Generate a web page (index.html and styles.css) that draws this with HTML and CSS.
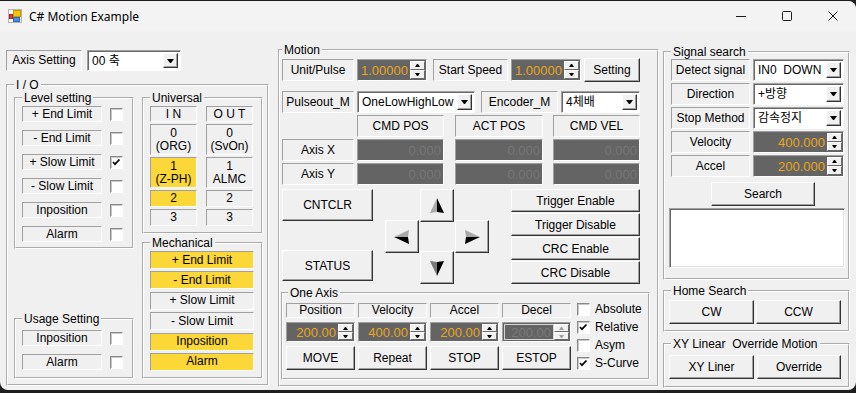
FILE: index.html
```html
<!DOCTYPE html>
<html>
<head>
    <meta charset="utf-8">
    <link rel="stylesheet" href="styles.css">
</head>
<body>
<div class="window">
    <div class="titlebar">
        <svg class="app-icon" width="14" height="14" viewBox="0 0 14 14">
            <rect x="0.5" y="0.5" width="13" height="13" fill="#f6f6f6" stroke="#b4b4b4"/>
            <rect x="5.5" y="1.5" width="7" height="6" fill="#f7c600" stroke="#c99a00"/>
            <rect x="5.5" y="8.5" width="6" height="4" fill="#4a90e2" stroke="#2d6cb5"/>
            <rect x="1.5" y="5.5" width="3" height="4" fill="#e03c31" stroke="#a52a22"/>
        </svg>
        <span class="title">C# Motion Example</span>
        <div class="caption-buttons">
            <span><svg width="10" height="10"><path d="M0 5.5h10" stroke="#1b1b1b"/></svg></span>
            <span><svg width="10" height="10"><rect x="0.5" y="0.5" width="9" height="9" rx="1" fill="none" stroke="#1b1b1b"/></svg></span>
            <span><svg width="10" height="10"><path d="M0.5 0.5l9 9M9.5 0.5l-9 9" stroke="#1b1b1b"/></svg></span>
        </div>
    </div>

    <div class="client">
        <div class="col-left">
            <div class="axis-row">
                <div class="lbl axis-lbl">Axis Setting</div>
                <div class="combo axis-combo"><span class="combo-text">00 축</span><span class="drop"></span></div>
            </div>

            <fieldset class="group io">
                <legend>I / O</legend>
                <div class="io-body">
                    <div class="io-left">
                        <fieldset class="group level">
                            <legend>Level setting</legend>
                            <div class="checks">
                                <div class="chk-row"><div class="lbl">+ End Limit</div><span class="chk"></span></div>
                                <div class="chk-row"><div class="lbl">- End Limit</div><span class="chk"></span></div>
                                <div class="chk-row"><div class="lbl">+ Slow Limit</div><span class="chk"><svg width="11" height="11" viewBox="0 0 11 11"><path d="M2 5l2 2.2L8.5 2.5" stroke="#000" stroke-width="1.7" fill="none"/></svg></span></div>
                                <div class="chk-row"><div class="lbl">- Slow Limit</div><span class="chk"></span></div>
                                <div class="chk-row"><div class="lbl">Inposition</div><span class="chk"></span></div>
                                <div class="chk-row"><div class="lbl">Alarm</div><span class="chk"></span></div>
                            </div>
                        </fieldset>

                        <fieldset class="group usage">
                            <legend>Usage Setting</legend>
                            <div class="checks">
                                <div class="chk-row"><div class="lbl">Inposition</div><span class="chk"></span></div>
                                <div class="chk-row"><div class="lbl">Alarm</div><span class="chk"></span></div>
                            </div>
                        </fieldset>
                    </div>

                    <div class="io-right">
                        <fieldset class="group universal">
                            <legend>Universal</legend>
                            <div class="uni-grid">
                                <div class="lbl">I N</div>
                                <div class="lbl">O U T</div>
                                <div class="lbl">0<br>(ORG)</div>
                                <div class="lbl">0<br>(SvOn)</div>
                                <div class="lbl on">1<br>(Z-PH)</div>
                                <div class="lbl">1<br>ALMC</div>
                                <div class="lbl on">2</div>
                                <div class="lbl">2</div>
                                <div class="lbl">3</div>
                                <div class="lbl">3</div>
                            </div>
                        </fieldset>

                        <fieldset class="group mech">
                            <legend>Mechanical</legend>
                            <div class="mech-list">
                                <div class="lbl on">+ End Limit</div>
                                <div class="lbl on">- End Limit</div>
                                <div class="lbl">+ Slow Limit</div>
                                <div class="lbl">- Slow Limit</div>
                                <div class="lbl on">Inposition</div>
                                <div class="lbl on">Alarm</div>
                            </div>
                        </fieldset>
                    </div>
                </div>
            </fieldset>
        </div>

        <fieldset class="group motion">
            <legend>Motion</legend>
            <div class="motion-body">
                <div class="m-row">
                    <div class="lbl unit-lbl">Unit/Pulse</div>
                    <div class="num num-m"><span class="num-val">1.00000</span><span class="spin"><i class="inc"></i><i class="dec"></i></span></div>
                    <div class="lbl speed-lbl">Start Speed</div>
                    <div class="num num-m"><span class="num-val">1.00000</span><span class="spin"><i class="inc"></i><i class="dec"></i></span></div>
                    <button class="btn setting">Setting</button>
                </div>

                <div class="m-row m-row2">
                    <div class="lbl unit-lbl">Pulseout_M</div>
                    <div class="combo pulse-combo"><span class="combo-text">OneLowHighLow</span><span class="drop"></span></div>
                    <div class="lbl enc-lbl">Encoder_M</div>
                    <div class="combo enc-combo"><span class="combo-text">4체배</span><span class="drop"></span></div>
                </div>

                <div class="pos-grid">
                    <span></span>
                    <div class="lbl">CMD POS</div>
                    <div class="lbl act">ACT POS</div>
                    <div class="lbl">CMD VEL</div>

                    <div class="lbl axis-name">Axis X</div>
                    <div class="field">0.000</div>
                    <div class="field act">0.000</div>
                    <div class="field">0.000</div>

                    <div class="lbl axis-name">Axis Y</div>
                    <div class="field">0.000</div>
                    <div class="field act">0.000</div>
                    <div class="field">0.000</div>
                </div>

                <div class="controls">
                    <div class="ctl-left">
                        <button class="btn cnt">CNTCLR</button>
                        <button class="btn status">STATUS</button>
                    </div>

                    <div class="pad">
                        <button class="btn up"><svg width="16" height="16" viewBox="0 0 16 16"><polygon points="8,0 1,15 8,14" fill="#a8a8a8"/><polygon points="8,0 8,14 15,15" fill="#000"/></svg></button>
                        <button class="btn left"><svg width="16" height="16" viewBox="0 0 16 16"><polygon points="0,8 15,1 14,8" fill="#a8a8a8"/><polygon points="0,8 14,8 15,15" fill="#000"/></svg></button>
                        <button class="btn right"><svg width="16" height="16" viewBox="0 0 16 16"><polygon points="16,8 1,1 2,8" fill="#a8a8a8"/><polygon points="16,8 2,8 1,15" fill="#000"/></svg></button>
                        <button class="btn down"><svg width="16" height="16" viewBox="0 0 16 16"><polygon points="8,16 1,1 8,2" fill="#7a7a7a"/><polygon points="8,16 8,2 15,1" fill="#000"/></svg></button>
                    </div>

                    <div class="ctl-right">
                        <button class="btn">Trigger Enable</button>
                        <button class="btn">Trigger Disable</button>
                        <button class="btn">CRC Enable</button>
                        <button class="btn">CRC Disable</button>
                    </div>
                </div>

                <fieldset class="group one-axis">
                    <legend>One Axis</legend>
                    <div class="one-body">
                        <div class="one-grid">
                            <div class="lbl">Position</div>
                            <div class="lbl">Velocity</div>
                            <div class="lbl">Accel</div>
                            <div class="lbl">Decel</div>

                            <div class="num"><span class="num-val">200.00</span><span class="spin"><i class="inc"></i><i class="dec"></i></span></div>
                            <div class="num"><span class="num-val">400.00</span><span class="spin"><i class="inc"></i><i class="dec"></i></span></div>
                            <div class="num"><span class="num-val">200.00</span><span class="spin"><i class="inc"></i><i class="dec"></i></span></div>
                            <div class="num off"><span class="num-val">200.00</span><span class="spin"><i class="inc"></i><i class="dec"></i></span></div>

                            <button class="btn">MOVE</button>
                            <button class="btn">Repeat</button>
                            <button class="btn">STOP</button>
                            <button class="btn">ESTOP</button>
                        </div>

                        <div class="mode-list">
                            <div class="mode"><span class="chk"></span>Absolute</div>
                            <div class="mode"><span class="chk"><svg width="11" height="11" viewBox="0 0 11 11"><path d="M2 5l2 2.2L8.5 2.5" stroke="#000" stroke-width="1.7" fill="none"/></svg></span>Relative</div>
                            <div class="mode"><span class="chk"></span>Asym</div>
                            <div class="mode"><span class="chk"><svg width="11" height="11" viewBox="0 0 11 11"><path d="M2 5l2 2.2L8.5 2.5" stroke="#000" stroke-width="1.7" fill="none"/></svg></span>S-Curve</div>
                        </div>
                    </div>
                </fieldset>
            </div>
        </fieldset>

        <div class="col-right">
            <fieldset class="group signal">
                <legend>Signal search</legend>
                <div class="sig-body">
                    <div class="sig-rows">
                        <div class="sig-row">
                            <div class="lbl">Detect signal</div>
                            <div class="combo"><span class="combo-text pre">IN0  DOWN</span><span class="drop"></span></div>
                        </div>
                        <div class="sig-row">
                            <div class="lbl">Direction</div>
                            <div class="combo"><span class="combo-text">+방향</span><span class="drop"></span></div>
                        </div>
                        <div class="sig-row">
                            <div class="lbl">Stop Method</div>
                            <div class="combo"><span class="combo-text">감속정지</span><span class="drop"></span></div>
                        </div>
                        <div class="sig-row">
                            <div class="lbl">Velocity</div>
                            <div class="num"><span class="num-val">400.000</span><span class="spin"><i class="inc"></i><i class="dec"></i></span></div>
                        </div>
                        <div class="sig-row">
                            <div class="lbl">Accel</div>
                            <div class="num"><span class="num-val">200.000</span><span class="spin"><i class="inc"></i><i class="dec"></i></span></div>
                        </div>
                    </div>
                    <button class="btn search">Search</button>
                    <div class="result"></div>
                </div>
            </fieldset>

            <fieldset class="group home">
                <legend>Home Search</legend>
                <div class="pair">
                    <button class="btn">CW</button>
                    <button class="btn">CCW</button>
                </div>
            </fieldset>

            <fieldset class="group xy">
                <legend>XY Linear  Override Motion</legend>
                <div class="pair">
                    <button class="btn">XY Liner</button>
                    <button class="btn">Override</button>
                </div>
            </fieldset>
        </div>
    </div>
</div>
</body>
</html>
```

FILE: styles.css
```css
* {
    box-sizing: border-box;
}

html, body {
    margin: 0;
}

body {
    width: 856px;
    height: 393px;
    overflow: hidden;
    background: #1e1e1e;
    font-family: "Liberation Sans", "Noto Sans CJK KR", sans-serif;
    font-size: 12px;
    color: #000;
}

.window {
    margin-top: 1px;
    height: 389px;
    background: #f0f0f0;
    border-radius: 0 8px 8px 8px;
    overflow: hidden;
}

/* title bar */
.titlebar {
    display: flex;
    align-items: center;
    height: 30px;
    background: #f3f3f3;
}

.app-icon {
    margin-left: 8px;
}

.title {
    margin-left: 7px;
    font-family: "Noto Sans", sans-serif;
    font-size: 12px;
}

.caption-buttons {
    display: flex;
    margin-left: auto;
}

.caption-buttons span {
    display: flex;
    align-items: center;
    justify-content: center;
    width: 46px;
    height: 30px;
}

.client {
    display: flex;
    align-items: flex-start;
    padding-left: 6px;
}

/* common controls */
.group {
    margin: 0;
    padding: 0;
    min-width: 0;
    border: 2px groove #fff;
}

.group > legend {
    margin-left: 6px;
    padding: 0 2px;
    font-size: 12px;
    line-height: 16px;
    white-space: pre;
}

.lbl {
    display: flex;
    align-items: center;
    justify-content: center;
    text-align: center;
    line-height: 13px;
    white-space: nowrap;
    border: 1px solid;
    border-color: #a0a0a0 #fff #fff #a0a0a0;
}

.lbl.on {
    background: #fbd737;
}

.chk {
    display: flex;
    align-items: center;
    justify-content: center;
    flex: none;
    width: 13px;
    height: 13px;
    background: #fff;
    border: 1px solid;
    border-color: #8a8a8a #fff #fff #8a8a8a;
    box-shadow: inset 1px 1px #c8c8c8;
}

.btn {
    margin: 0;
    padding: 0;
    font-family: inherit;
    font-size: 12px;
    color: #000;
    background: #f0f0f0;
    border: 1px solid;
    border-color: #fff #333 #333 #fff;
    box-shadow: inset -1px -1px #a0a0a0;
}

.combo {
    display: flex;
    padding: 2px;
    background: #fff;
    border: 1px solid;
    border-color: #a0a0a0 #fff #fff #a0a0a0;
    box-shadow: inset 1px 1px #696969;
}

.combo-text {
    flex: 1;
    display: flex;
    align-items: center;
    padding-left: 2px;
    line-height: 14px;
    white-space: nowrap;
    overflow: hidden;
}

.combo-text.pre {
    white-space: pre;
}

.drop {
    display: flex;
    align-items: center;
    justify-content: center;
    width: 15px;
    background: #f0f0f0;
    border: 1px solid;
    border-color: #fff #333 #333 #fff;
    box-shadow: inset -1px -1px #a0a0a0;
}

.drop::before {
    content: "";
    width: 1px;
    border-left: 3px solid transparent;
    border-right: 3px solid transparent;
    border-top: 4px solid #000;
}

.num {
    display: flex;
    padding: 1px;
    background: #646464;
    border: 1px solid;
    border-color: #a0a0a0 #fff #fff #a0a0a0;
}

.num-val {
    flex: 1;
    display: flex;
    align-items: center;
    justify-content: flex-end;
    padding-right: 2px;
    font-size: 13px;
    color: #e8a41a;
}

.spin {
    display: flex;
    flex-direction: column;
    width: 15px;
    background: #f0f0f0;
}

.spin i {
    flex: 1;
    display: flex;
    align-items: center;
    justify-content: center;
    border: 1px solid;
    border-color: #fff #696969 #696969 #fff;
}

.spin i::before {
    content: "";
    width: 1px;
    border-left: 2px solid transparent;
    border-right: 2px solid transparent;
}

.spin .inc::before {
    border-bottom: 3px solid #000;
}

.spin .dec::before {
    border-top: 3px solid #000;
}

.num.off .num-val {
    color: #7a7a7a;
    border: 1px solid #d4d4d4;
}

.num.off .spin .inc::before {
    border-bottom-color: #a0a0a0;
}

.num.off .spin .dec::before {
    border-top-color: #a0a0a0;
}

.field {
    display: flex;
    align-items: center;
    justify-content: flex-end;
    padding-right: 2px;
    font-size: 13px;
    color: #767676;
    background: #646464;
    border: 1px solid;
    border-color: #a0a0a0 #fff #fff #a0a0a0;
}

/* left column */
.col-left {
    width: 263px;
    padding-top: 19px;
}

.axis-row {
    display: flex;
    gap: 5px;
    height: 21px;
}

.axis-lbl {
    width: 76px;
}

.axis-combo {
    width: 94px;
}

.io {
    width: 263px;
    height: 309px;
    margin-top: 6px;
}

.io-body {
    display: flex;
    gap: 8px;
    margin-top: -3px;
    padding-left: 6px;
}

.io-left {
    display: flex;
    flex-direction: column;
    justify-content: space-between;
    height: 289px;
}

.io-right {
    display: flex;
    flex-direction: column;
    gap: 1px;
}

.level {
    width: 120px;
    height: 159px;
}

.usage {
    width: 120px;
    height: 68px;
}

.checks {
    display: flex;
    flex-direction: column;
    gap: 8px;
    padding-left: 6px;
}

.usage .checks {
    padding-top: 3px;
}

.chk-row {
    display: flex;
    align-items: center;
    height: 16px;
}

.chk-row .lbl {
    width: 80px;
    height: 16px;
}

.chk-row .chk {
    margin-left: 8px;
}

.universal,
.mech {
    width: 121px;
    height: 144px;
}

.uni-grid {
    display: grid;
    grid-template-columns: 47px 47px;
    grid-template-rows: 16px 31px 31px 17px 17px;
    column-gap: 9px;
    row-gap: 2px;
    padding-left: 6px;
}

.mech-list {
    display: flex;
    flex-direction: column;
    justify-content: space-between;
    width: 104px;
    height: 120px;
    margin-left: 6px;
}

.mech-list .lbl {
    height: 18px;
}

/* motion */
.motion {
    width: 381px;
    height: 345px;
    margin-left: 9px;
    margin-top: 11px;
}

.motion > legend {
    margin-left: 2px;
}

.motion-body {
    padding-left: 2px;
}

.m-row {
    display: flex;
    align-items: center;
    gap: 3px;
    height: 24px;
}

.m-row .lbl,
.m-row .num,
.m-row .combo {
    height: 22px;
}

.m-row2 {
    height: 22px;
    margin-top: 9px;
}

.unit-lbl {
    width: 72px;
}

.num-m {
    width: 70px;
}

.speed-lbl {
    width: 75px;
    margin-left: 3px;
}

.setting {
    width: 56px;
    height: 24px;
}

.pulse-combo {
    width: 118px;
}

.enc-lbl {
    width: 77px;
    margin-left: 3px;
}

.enc-combo {
    width: 79px;
}

.pos-grid {
    display: grid;
    grid-template-columns: 75px 98px 98px 87px;
    grid-auto-rows: 22px;
    row-gap: 2px;
    margin-top: 2px;
}

.pos-grid > * {
    width: 87px;
}

.pos-grid .act {
    width: 88px;
}

.pos-grid .axis-name {
    width: 72px;
}

.controls {
    display: flex;
    height: 95px;
    margin-top: 4px;
}

.ctl-left {
    display: flex;
    flex-direction: column;
    justify-content: space-between;
    width: 91px;
    padding-bottom: 3px;
}

.cnt {
    height: 32px;
}

.status {
    height: 31px;
}

.pad {
    display: grid;
    grid-template-columns: 35px 35px 34px;
    grid-template-rows: 31px 31px 33px;
    margin-left: 12px;
}

.pad .btn {
    display: flex;
    align-items: center;
    justify-content: center;
    width: 34px;
    height: 33px;
}

.pad .up {
    grid-area: 1 / 2;
}

.pad .left {
    grid-area: 2 / 1;
}

.pad .right {
    grid-area: 2 / 3;
}

.pad .down {
    grid-area: 3 / 2;
}

.ctl-right {
    display: flex;
    flex-direction: column;
    gap: 1px;
    width: 129px;
    margin-left: 22px;
}

.ctl-right .btn {
    height: 23px;
}

.one-axis {
    width: 369px;
    height: 95px;
    margin-top: 1px;
    margin-left: -1px;
}

.one-axis > legend {
    margin-left: 5px;
}

.one-body {
    display: flex;
    padding: 2px 0 0 3px;
}

.one-grid {
    display: grid;
    grid-template-columns: repeat(4, 69px);
    grid-template-rows: 15px 20px 24px;
    column-gap: 3px;
    row-gap: 4px;
}

.mode-list {
    display: flex;
    flex-direction: column;
    margin-left: 6px;
}

.mode {
    display: flex;
    align-items: flex-start;
    gap: 5px;
    height: 18px;
    line-height: 13px;
}

/* right column */
.col-right {
    display: flex;
    flex-direction: column;
    width: 187px;
    margin-left: 4px;
    padding-top: 13px;
}

.signal {
    height: 236px;
}

.sig-body {
    display: flex;
    flex-direction: column;
    align-items: flex-start;
    margin-top: -1px;
    padding-left: 6px;
}

.sig-rows {
    display: flex;
    flex-direction: column;
    gap: 2px;
}

.sig-row {
    display: flex;
    gap: 3px;
    height: 22px;
}

.sig-row .lbl {
    width: 79px;
}

.sig-row .combo,
.sig-row .num {
    width: 91px;
}

.search {
    width: 104px;
    height: 24px;
    margin: 5px 0 0 40px;
}

.result {
    width: 176px;
    height: 60px;
    margin: 2px 0 0 -2px;
    background: #fff;
    border: 1px solid;
    border-color: #a0a0a0 #fff #fff #a0a0a0;
    box-shadow: inset 1px 1px #696969, inset -1px -1px #e3e3e3;
}

.home {
    height: 49px;
    margin-top: 3px;
}

.xy {
    height: 52px;
    margin-top: 4px;
}

.pair {
    display: flex;
    gap: 2px;
    padding: 1px 0 0 4px;
}

.pair .btn {
    width: 85px;
    height: 24px;
}

.xy .pair {
    gap: 3px;
    padding-top: 3px;
}

.xy .pair .btn + .btn {
    width: 84px;
}
```
